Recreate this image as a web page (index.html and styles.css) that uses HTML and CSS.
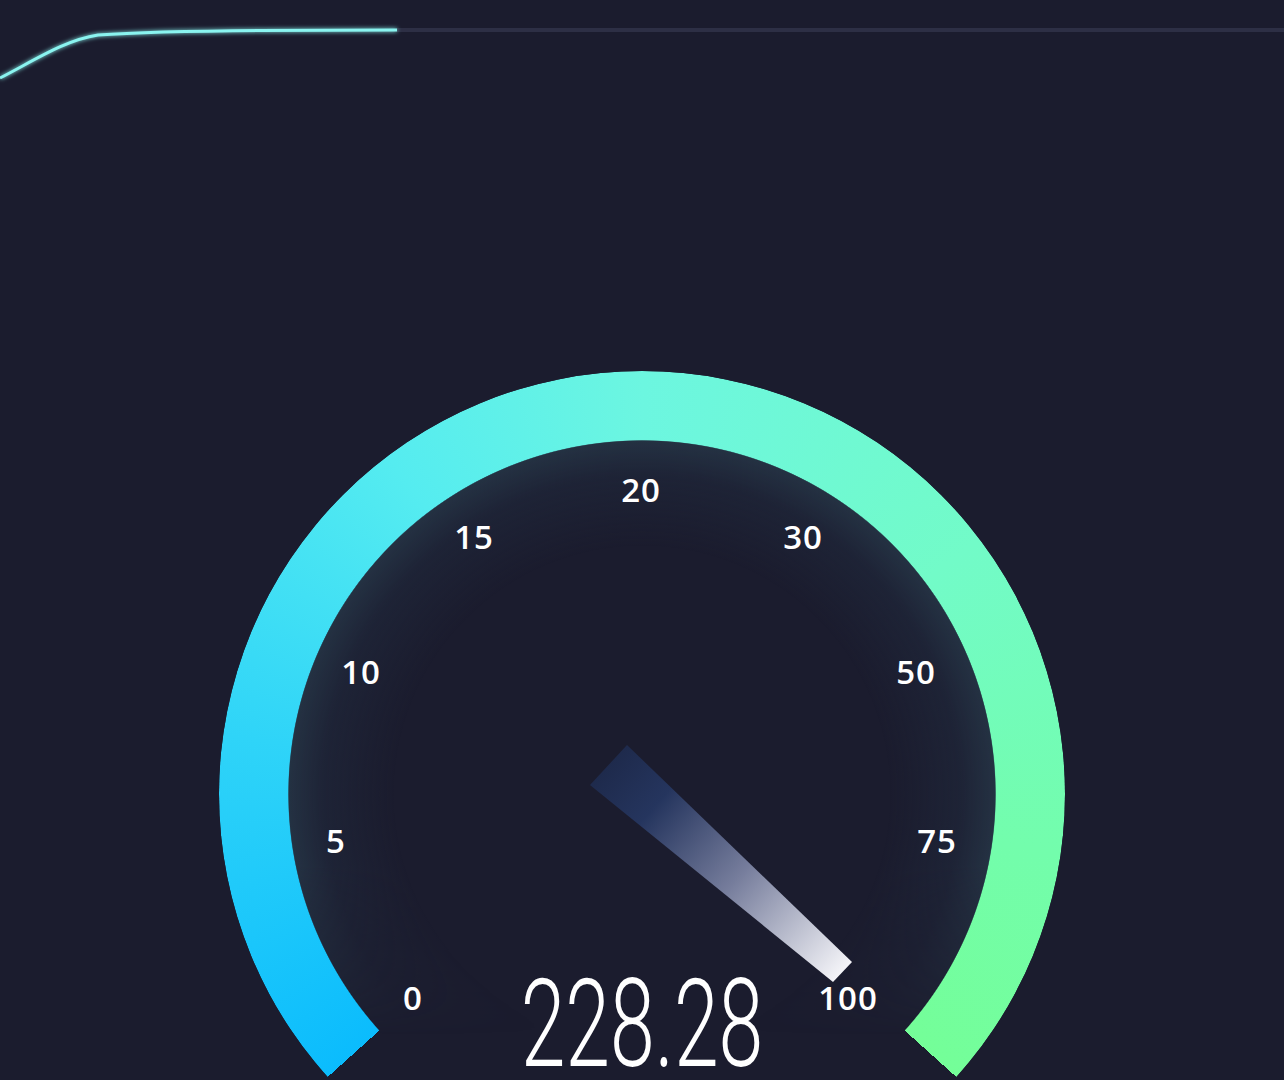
FILE: index.html
```html
<!DOCTYPE html>
<html lang="en">
<head>
    <meta charset="UTF-8">
    <meta name="viewport" content="width=device-width, initial-scale=1.0">
    <title>Speed test</title>
    <link rel="stylesheet" href="styles.css">
</head>
<body>
    <header class="trend">
        <svg width="1284" height="90" viewBox="0 0 1284 90">
            <defs>
                <filter id="line-glow" x="-5%" y="-50%" width="110%" height="200%">
                    <feGaussianBlur stdDeviation="2" result="blur"/>
                    <feMerge>
                        <feMergeNode in="blur"/>
                        <feMergeNode in="SourceGraphic"/>
                    </feMerge>
                </filter>
            </defs>
            <!-- remaining part of the graph -->
            <line x1="397" y1="30" x2="1284" y2="30" stroke="#2d2f45" stroke-width="4"/>
            <!-- measured speed so far -->
            <path d="M0 78 C 35 60, 65 40, 98 35 C 140 32, 200 31, 260 30.5 L 397 30" fill="none" stroke="#8af4f0" stroke-width="3" filter="url(#line-glow)"/>
        </svg>
    </header>

    <main class="meter">
        <div class="gauge">
            <div class="gauge-ring"></div>
            <div class="gauge-glow"></div>

            <svg class="needle" width="846" height="709" viewBox="0 0 846 709">
                <defs>
                    <linearGradient id="needle-fill" gradientUnits="userSpaceOnUse" x1="389" y1="394" x2="623" y2="601">
                        <stop offset="0" stop-color="#1e2a4c"/>
                        <stop offset="0.2" stop-color="#25355e"/>
                        <stop offset="0.55" stop-color="#767d9c"/>
                        <stop offset="1" stop-color="#f4f4f8"/>
                    </linearGradient>
                </defs>
                <polygon points="408,374 371,414 614,611 633,591" fill="url(#needle-fill)"/>
            </svg>

            <span class="tick tick-0">0</span>
            <span class="tick tick-5">5</span>
            <span class="tick tick-10">10</span>
            <span class="tick tick-15">15</span>
            <span class="tick tick-20">20</span>
            <span class="tick tick-30">30</span>
            <span class="tick tick-50">50</span>
            <span class="tick tick-75">75</span>
            <span class="tick tick-100">100</span>

            <div class="speed">228.28</div>
        </div>
    </main>
</body>
</html>
```

FILE: styles.css
```css
body {
    margin: 0;
    padding: 0;
    height: 1080px;
    overflow: hidden;
    background-color: #1b1c2e;
    font-family: "Open Sans", "DejaVu Sans", sans-serif;
    color: #fff;
}
.trend svg {
    display: block;
}
.meter {
    display: flex;
    justify-content: center;
    padding-top: 281px;
}
/* the dial is 846px round, only the part above the fold is shown */
.gauge {
    position: relative;
    width: 846px;
    height: 709px;
    overflow: hidden;
    flex-shrink: 0;
}
.gauge-ring {
    position: absolute;
    left: 0;
    top: 0;
    width: 846px;
    height: 846px;
    border-radius: 50%;
    background: conic-gradient(from 228deg,
        #0bbcfd 0deg,
        #2fd4f8 50deg,
        #55ecf0 95deg,
        #6cf6e0 132deg,
        #72fbc8 185deg,
        #73fdac 230deg,
        #74fe98 264deg,
        transparent 264deg);
    -webkit-mask: radial-gradient(circle, transparent 353px, #000 354px);
    mask: radial-gradient(circle, transparent 353px, #000 354px);
}
.gauge-glow {
    position: absolute;
    left: 69px;
    top: 69px;
    width: 708px;
    height: 708px;
    border-radius: 50%;
    background: radial-gradient(circle closest-side,
        rgba(27, 28, 46, 0) 70%,
        rgba(36, 50, 70, 0.35) 90%,
        rgba(46, 72, 88, 0.5) 100%);
    -webkit-mask: linear-gradient(#000 60%, transparent 84%);
    mask: linear-gradient(#000 60%, transparent 84%);
}
.needle {
    position: absolute;
    left: 0;
    top: 0;
}
.tick {
    position: absolute;
    transform: translate(-50%, -50%);
    font-size: 33px;
    font-weight: 600;
    letter-spacing: 1px;
    line-height: 1;
}
.tick-0 { left: 194px; top: 626px; }
.tick-5 { left: 117px; top: 469px; }
.tick-10 { left: 142px; top: 300px; }
.tick-15 { left: 255px; top: 165px; }
.tick-20 { left: 422px; top: 118px; }
.tick-30 { left: 584px; top: 165px; }
.tick-50 { left: 697px; top: 300px; }
.tick-75 { left: 718px; top: 469px; }
.tick-100 { left: 629px; top: 626px; }
.speed {
    position: absolute;
    left: 50%;
    top: 654px;
    transform: translate(-50%, -50%) scaleX(0.66);
    font-family: Roboto, "Liberation Sans", sans-serif;
    font-weight: 300;
    font-size: 122px;
    line-height: 0.8;
    white-space: nowrap;
}
```
